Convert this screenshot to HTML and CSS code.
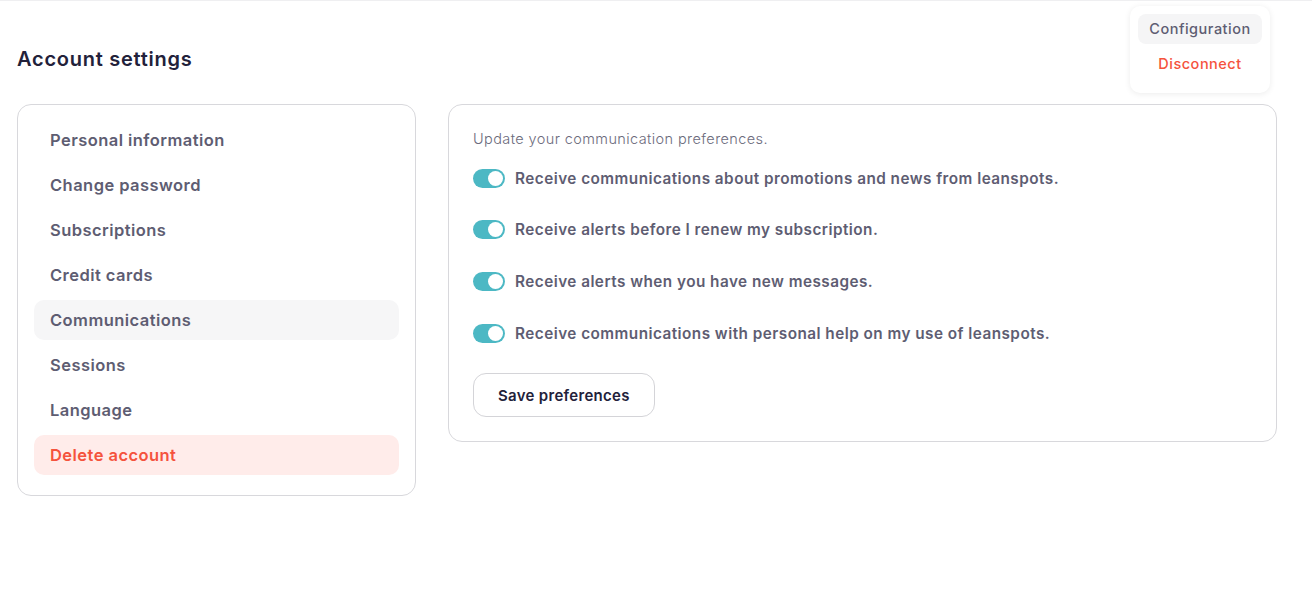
FILE: index.html
```html
<!DOCTYPE html>
<html>
<head>
<meta charset="utf-8">
<link rel="stylesheet" href="styles.css">
</head>
<body>
<div class="topline"></div>
<div class="page">
  <h1 class="title">Account settings</h1>
  <div class="layout">
    <nav class="side card">
      <div class="item">Personal information</div>
      <div class="item">Change password</div>
      <div class="item">Subscriptions</div>
      <div class="item">Credit cards</div>
      <div class="item active">Communications</div>
      <div class="item">Sessions</div>
      <div class="item">Language</div>
      <div class="item danger">Delete account</div>
    </nav>
    <section class="main card">
      <p class="intro">Update your communication preferences.</p>
      <div class="prefs">
        <label class="pref"><span class="toggle"><span class="knob"></span></span>Receive communications about promotions and news from leanspots.</label>
        <label class="pref"><span class="toggle"><span class="knob"></span></span>Receive alerts before I renew my subscription.</label>
        <label class="pref"><span class="toggle"><span class="knob"></span></span>Receive alerts when you have new messages.</label>
        <label class="pref"><span class="toggle"><span class="knob"></span></span>Receive communications with personal help on my use of leanspots.</label>
      </div>
      <button class="save">Save preferences</button>
    </section>
  </div>
</div>
<div class="menu">
  <div class="menu-item">Configuration</div>
  <div class="menu-item red">Disconnect</div>
</div>
</body>
</html>
```
FILE: styles.css
```css
* { box-sizing: border-box; }
html, body { margin: 0; padding: 0; background: #fff; }
body {
  font-family: "Inter", "Liberation Sans", sans-serif;
  color: #5e5d72;
  width: 1312px;
  height: 612px;
  overflow: hidden;
  position: relative;
}
.topline { height: 1px; background: #efeff1; }
.page { padding: 0 35px 0 17px; }
.title {
  margin: 0;
  padding-top: 46px;
  font-size: 20px;
  line-height: 24px;
  font-weight: 600;
  letter-spacing: 0.75px;
  color: #22213a;
}
.layout {
  display: flex;
  gap: 32px;
  margin-top: 33px;
  align-items: flex-start;
}
.card {
  border: 1px solid #d8d8dc;
  border-radius: 14px;
  background: #fff;
}
.side {
  width: 399px;
  padding: 15px 16px 20px;
  display: flex;
  flex-direction: column;
  gap: 5px;
}
.item {
  height: 40px;
  line-height: 40px;
  padding-left: 16px;
  border-radius: 10px;
  font-size: 16.5px;
  font-weight: 600;
  letter-spacing: 0.45px;
  color: #5e5d72;
}
.item.active { background: #f6f6f7; }
.item.danger { background: #ffecea; color: #f5533d; }
.main {
  width: 829px;
  padding: 24px 24px 24px;
}
.intro {
  margin: 0;
  font-size: 14.5px;
  line-height: 20px;
  font-weight: 300;
  letter-spacing: 0.4px;
  color: #6c6b7c;
}
.prefs {
  margin-top: 18px;
  display: flex;
  flex-direction: column;
  gap: 29.7px;
}
.pref {
  display: flex;
  align-items: center;
  gap: 10px;
  height: 22px;
  font-size: 15.3px;
  font-weight: 600;
  letter-spacing: 0.47px;
  color: #5e5d72;
}
.toggle {
  width: 32px;
  height: 19px;
  border-radius: 10px;
  background: #4cb8c4;
  position: relative;
  flex: none;
}
.knob {
  position: absolute;
  right: 2px;
  top: 2px;
  width: 15px;
  height: 15px;
  border-radius: 50%;
  background: #fff;
}
.save {
  margin-top: 29px;
  height: 44px;
  padding: 0 24px;
  border: 1px solid #d4d4d8;
  border-radius: 13px;
  background: #fff;
  font-family: inherit;
  font-size: 15px;
  font-weight: 600;
  letter-spacing: 0.3px;
  color: #22213a;
}
.menu {
  position: absolute;
  top: 6px;
  left: 1130px;
  width: 140px;
  padding: 8px 8px 11px;
  background: #fff;
  border-radius: 10px;
  box-shadow: 0 1px 6px rgba(0,0,0,0.08);
  display: flex;
  flex-direction: column;
  gap: 2px;
}
.menu-item {
  height: 30px;
  line-height: 30px;
  text-align: center;
  border-radius: 8px;
  font-size: 14.5px;
  font-weight: 500;
  letter-spacing: 0.5px;
  color: #5e5d72;
}
.menu-item:first-child { background: #f5f5f6; }
.menu-item.red { color: #f5533d; height: 36px; line-height: 36px; }
```
